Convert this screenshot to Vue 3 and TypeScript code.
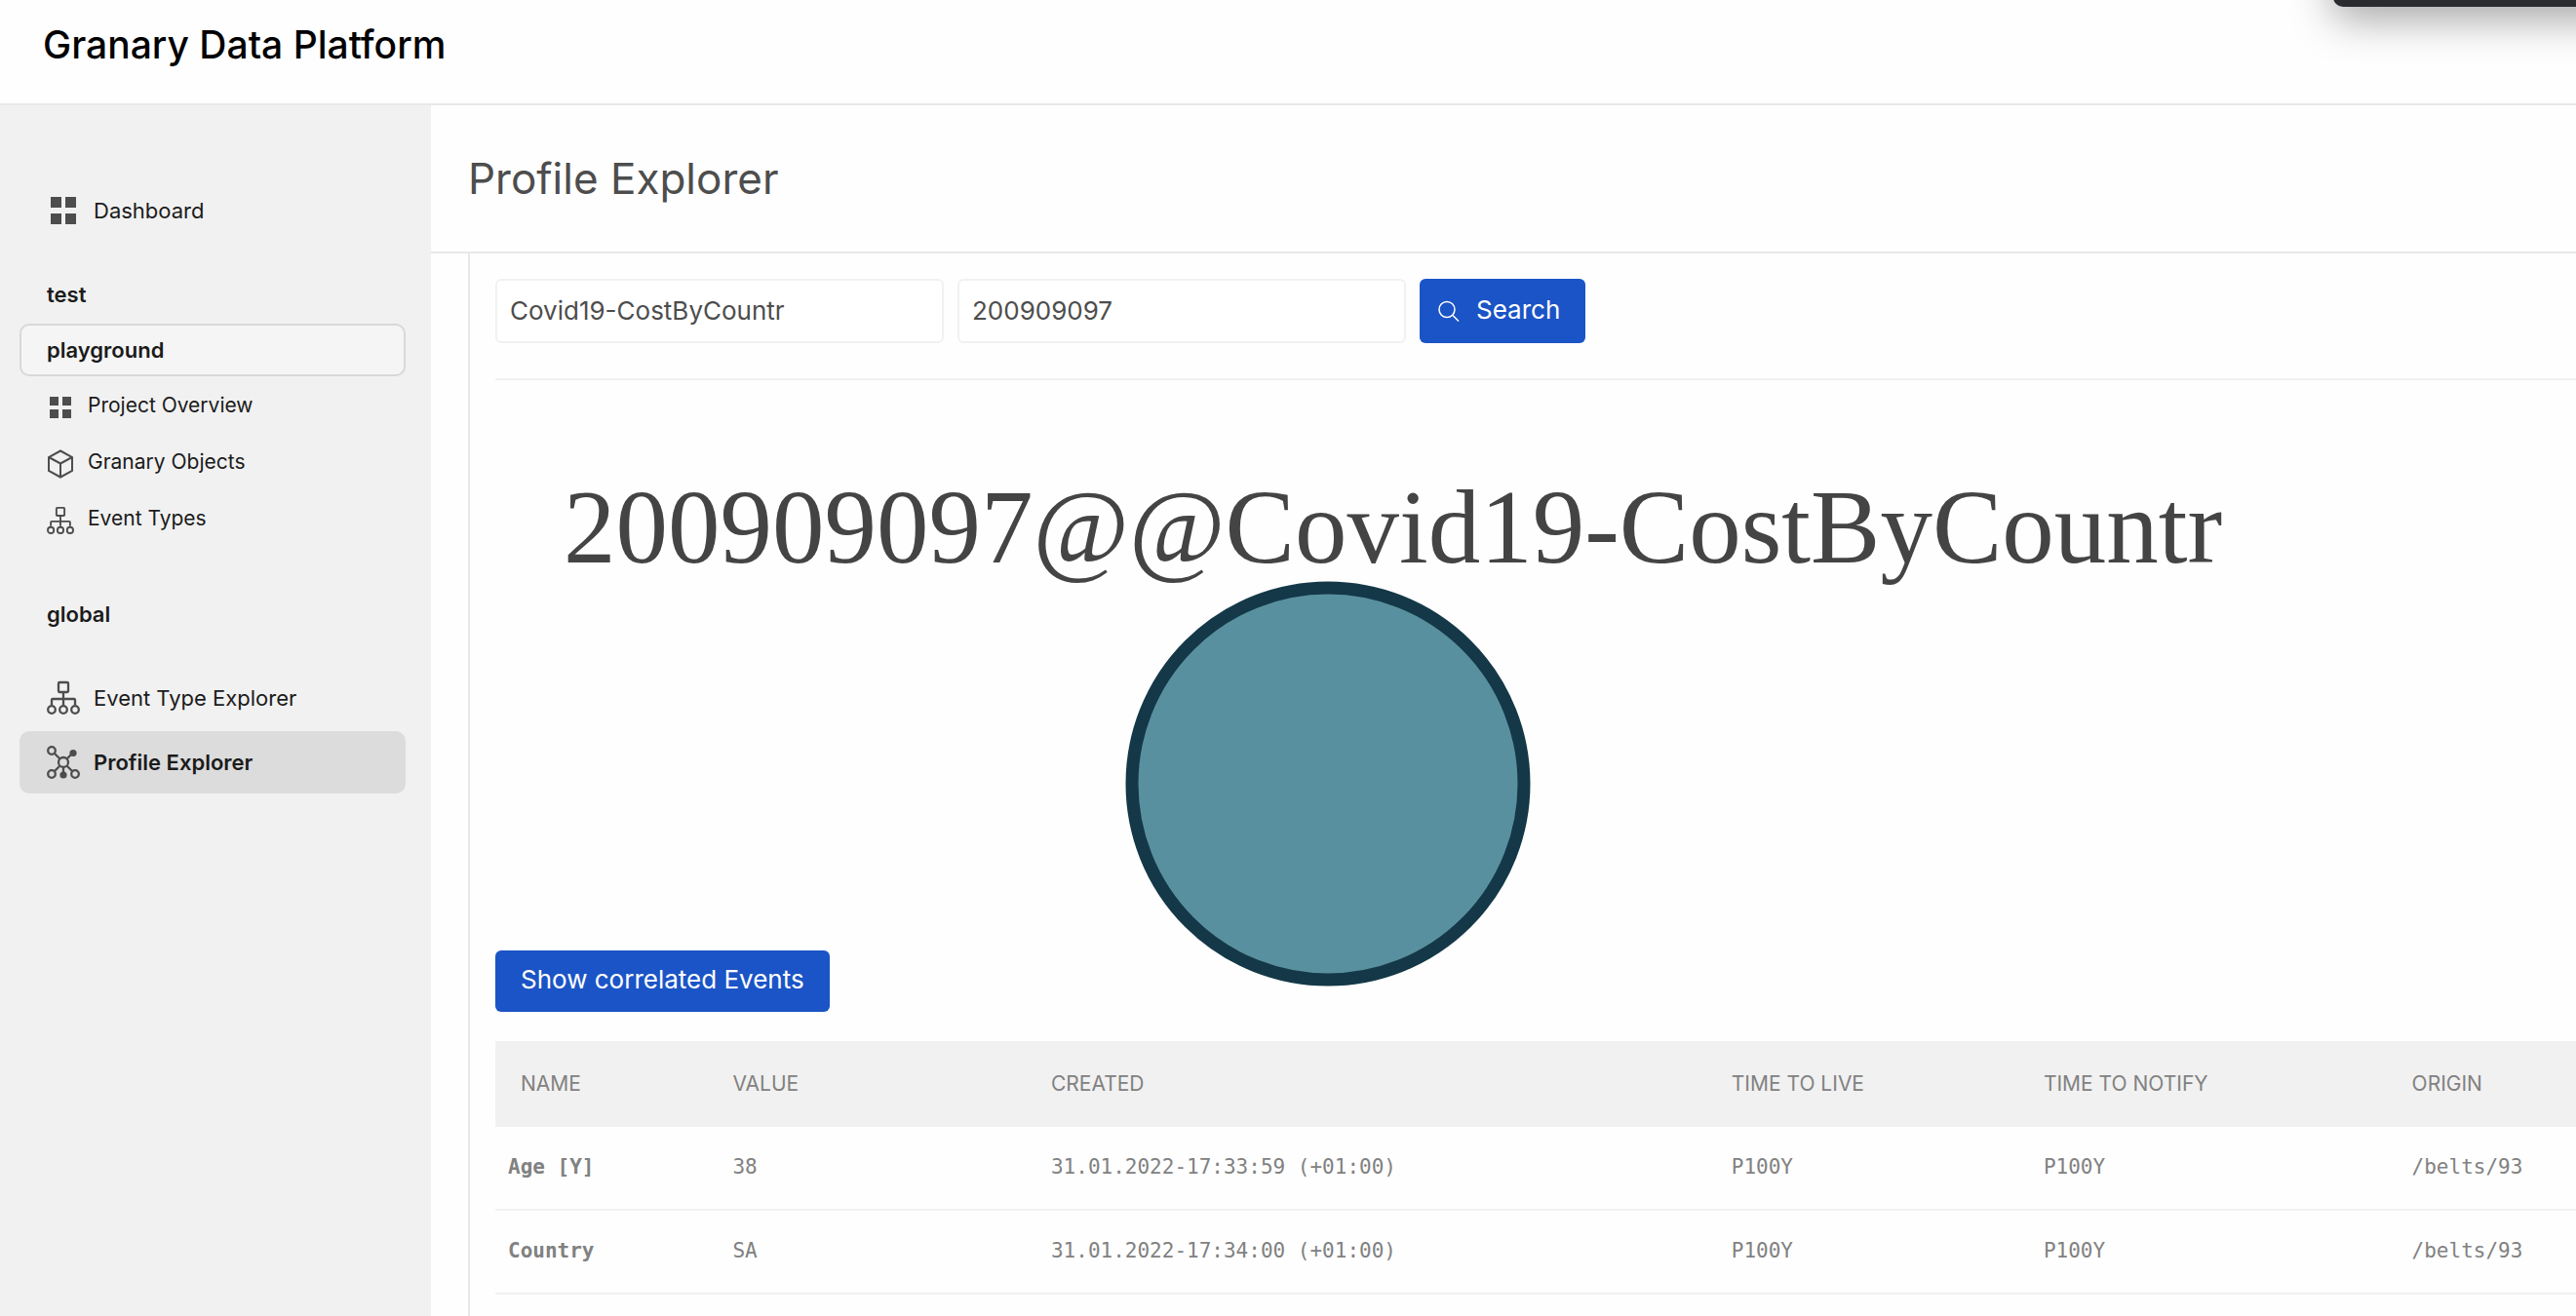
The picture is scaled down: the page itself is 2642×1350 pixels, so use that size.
<script setup lang="ts">
import { ref } from 'vue'

interface ProfileEntry {
  name: string
  value: string
  created: string
  timeToLive: string
  timeToNotify: string
  origin: string
}

const eventType = ref('Covid19-CostByCountr')
const correlationId = ref('200909097')

const columns = ['NAME', 'VALUE', 'CREATED', 'TIME TO LIVE', 'TIME TO NOTIFY', 'ORIGIN']

const entries: ProfileEntry[] = [
  { name: 'Age [Y]', value: '38', created: '31.01.2022-17:33:59 (+01:00)', timeToLive: 'P100Y', timeToNotify: 'P100Y', origin: '/belts/93' },
  { name: 'Country', value: 'SA', created: '31.01.2022-17:34:00 (+01:00)', timeToLive: 'P100Y', timeToNotify: 'P100Y', origin: '/belts/93' },
]
</script>

<template>
  <div class="app">
    <header class="topbar">
      <span class="brand">Granary Data Platform</span>
      <div class="overlay"></div>
    </header>

    <div class="body">
      <nav class="sidebar">
        <a href="#" class="item">
          <svg class="icon" viewBox="0 0 34 34" aria-hidden="true">
            <path class="solid" d="M4 3h11v11H4zM19 3h11v11H19zM4 20h11v11H4zM19 20h11v11H19z" />
          </svg>
          Dashboard
        </a>

        <a href="#" class="heading">test</a>
        <a href="#" class="heading selected">playground</a>

        <a href="#" class="item sub">
          <svg class="icon" viewBox="0 0 28 28" aria-hidden="true">
            <path class="solid" d="M3 3h9v9H3zM16 3h9v9h-9zM3 16h9v9H3zM16 16h9v9h-9z" />
          </svg>
          Project Overview
        </a>
        <a href="#" class="item sub">
          <svg class="icon" viewBox="0 0 28 28" aria-hidden="true">
            <path class="line thin" d="M14 0.5 26 7v14L14 27.5 2 21V7zM2 7l12 6.5L26 7M14 13.5v14" />
          </svg>
          Granary Objects
        </a>
        <a href="#" class="item sub">
          <svg class="icon" viewBox="0 0 34 34" aria-hidden="true">
            <rect class="line" x="12" y="1" width="10" height="10" rx="1" />
            <path class="line" d="M17 11v13M5 24v-5q0-1 1-1h22q1 0 1 1v5" />
            <circle class="line" cx="5" cy="29" r="3.800" />
            <circle class="line" cx="17" cy="29" r="3.800" />
            <circle class="line" cx="29" cy="29" r="3.800" />
          </svg>
          Event Types
        </a>

        <a href="#" class="heading global">global</a>

        <a href="#" class="item">
          <svg class="icon" viewBox="0 0 34 34" aria-hidden="true">
            <rect class="line" x="12" y="1" width="10" height="10" rx="1" />
            <path class="line" d="M17 11v13M5 24v-5q0-1 1-1h22q1 0 1 1v5" />
            <circle class="line" cx="5" cy="29" r="3.800" />
            <circle class="line" cx="17" cy="29" r="3.800" />
            <circle class="line" cx="29" cy="29" r="3.800" />
          </svg>
          Event Type Explorer
        </a>
        <a href="#" class="item current" aria-current="page">
          <svg class="icon" viewBox="0 0 34 34" aria-hidden="true">
            <path class="line" d="M8 8l5.500 5.500M26 8l-5.500 5.500M13.500 20.500L8 26M20.500 20.500L26 26M17 22v6" />
            <circle class="line" cx="17" cy="17" r="5" />
            <circle class="line" cx="5" cy="5" r="3.800" />
            <circle class="line" cx="5" cy="29" r="3.800" />
            <circle class="line" cx="29" cy="29" r="3.800" />
            <circle class="solid" cx="27" cy="7.500" r="3.600" />
            <circle class="solid" cx="17" cy="30" r="3.600" />
          </svg>
          Profile Explorer
        </a>
      </nav>

      <main class="main">
        <h1 class="title">Profile Explorer</h1>

        <div class="content">
          <form class="search" @submit.prevent>
            <input v-model="eventType" type="text" aria-label="Event type" />
            <input v-model="correlationId" type="text" aria-label="Correlation id" />
            <button type="submit" class="button">
              <svg class="lens" viewBox="0 0 22 22" aria-hidden="true">
                <circle cx="9" cy="9.500" r="8" />
                <path d="M15 15.500l6 6" />
              </svg>
              Search
            </button>
          </form>

          <section class="graph">
            <svg class="canvas" aria-label="Profile graph">
              <text class="node-label" x="70" y="187">200909097@@Covid19-CostByCountr</text>
              <circle class="node" cx="854" cy="414" r="201" />
            </svg>
            <button type="button" class="button events">Show correlated Events</button>
          </section>

          <table class="entries">
            <colgroup>
              <col class="c-name" />
              <col class="c-value" />
              <col class="c-created" />
              <col class="c-live" />
              <col class="c-notify" />
              <col />
            </colgroup>
            <thead>
              <tr>
                <th v-for="column in columns" :key="column" scope="col">{{ column }}</th>
              </tr>
            </thead>
            <tbody>
              <tr v-for="entry in entries" :key="entry.name">
                <th scope="row">{{ entry.name }}</th>
                <td>{{ entry.value }}</td>
                <td>{{ entry.created }}</td>
                <td>{{ entry.timeToLive }}</td>
                <td>{{ entry.timeToNotify }}</td>
                <td>{{ entry.origin }}</td>
              </tr>
            </tbody>
          </table>
        </div>
      </main>
    </div>
  </div>
</template>

<style>
body {
  margin: 0;
  background: #fefefe;
}
</style>

<style scoped>
.app {
  display: flex;
  flex-direction: column;
  min-height: 100vh;
  font-family: Inter, "Liberation Sans", sans-serif;
  color: #1b1b1b;
}

.app *,
.app {
  box-sizing: border-box;
}

.topbar {
  position: relative;
  height: 108px;
  padding: 21px 44px;
  border-bottom: 2px solid #e8e8e8;
  overflow: hidden;
}

.brand {
  display: block;
  font-size: 39px;
  font-weight: 500;
  line-height: 50px;
  color: #000;
}

/* Lower edge of a dark panel that hangs in from above */
.overlay {
  position: absolute;
  top: -60px;
  right: -60px;
  width: 309px;
  height: 67px;
  border-radius: 10px;
  background: #2a2b2f;
  box-shadow: 0 12px 44px rgba(0, 0, 0, 0.36);
}

.body {
  display: flex;
  flex: 1;
}

.sidebar {
  flex: none;
  width: 442px;
  padding: 76px 26px 0 20px;
  background: #f1f1f1;
}

.item,
.heading {
  display: flex;
  align-items: center;
  font-size: 22px;
  color: inherit;
  text-decoration: none;
}

.item {
  gap: 14px;
  height: 64px;
  margin-bottom: 2px;
  padding-left: 28px;
  border-radius: 10px;
}

.item.sub {
  height: 58px;
  margin-bottom: 0;
  font-size: 21px;
}

.item.current {
  background: #dcdcdc;
  font-weight: 600;
}

.heading {
  height: 54px;
  margin-bottom: 3px;
  padding-left: 26px;
  border: 2px solid transparent;
  border-radius: 10px;
  font-weight: 600;
}

.item + .heading {
  margin-top: 27px;
}

.heading.selected {
  margin-bottom: 0;
  border-color: #d8d8d8;
  background: #f5f5f5;
}

.item + .heading.global {
  margin: 43px 0 27px;
}

.icon {
  flex: none;
  width: 34px;
  height: 34px;
  overflow: visible;
}

.sub .icon {
  width: 28px;
  height: 28px;
  margin-top: 6px;
}

.solid {
  fill: #4d4d4d;
}

.line {
  fill: none;
  stroke: #4d4d4d;
  stroke-width: 2.3;
}

.line.thin {
  stroke-width: 2;
}

.main {
  flex: 1;
  min-width: 0;
  display: flex;
  flex-direction: column;
}

.title {
  margin: 0;
  padding: 47px 38px;
  border-bottom: 2px solid #e8e8e8;
  font-size: 44px;
  line-height: 56px;
  font-weight: 400;
  color: #4d4d4d;
}

.content {
  flex: 1;
  margin-left: 38px;
  padding: 26px 0 0 26px;
  border-left: 2px solid #e8e8e8;
}

.search {
  display: flex;
  gap: 14px;
  padding-bottom: 36px;
  border-bottom: 2px solid #f1f1f1;
}

.search input {
  width: 460px;
  height: 66px;
  padding: 0 13px 2px;
  border: 2px solid #f1f1f1;
  border-radius: 6px;
  background: #fff;
  font: inherit;
  font-size: 26px;
  color: #4d4d4d;
}

.button {
  display: flex;
  align-items: center;
  gap: 17px;
  height: 66px;
  padding: 0 26px 4px 19px;
  border: 0;
  border-radius: 6px;
  background: #1b54c6;
  font: inherit;
  font-size: 26px;
  color: #fff;
}

.lens {
  width: 22px;
  height: 22px;
  margin-top: 4px;
  fill: none;
  stroke: #fff;
  stroke-width: 1.5;
}

.graph {
  display: grid;
}

.canvas,
.events {
  grid-area: 1 / 1;
}

.canvas {
  width: 100%;
  height: 648px;
}

.node-label {
  font-family: "Liberation Serif", serif;
  font-size: 107px;
  fill: #444;
}

.node {
  fill: #5990a0;
  stroke: #143847;
  stroke-width: 13;
}

.events {
  align-self: end;
  justify-self: start;
  height: 63px;
  padding: 0 26px 4px;
}

.entries {
  width: 100%;
  margin-top: 30px;
  border-collapse: separate;
  border-spacing: 0;
  table-layout: fixed;
  color: #818181;
  font-family: "DejaVu Sans Mono", "Liberation Mono", monospace;
  font-size: 21px;
  text-align: left;
  white-space: nowrap;
}

.c-name {
  width: 10.8%;
}

.c-value {
  width: 15.3%;
}

.c-created {
  width: 32.7%;
}

.c-live {
  width: 15%;
}

.c-notify {
  width: 17.7%;
}

.entries th,
.entries td {
  height: 86px;
  padding: 0 0 2px 13px;
  border-bottom: 2px solid #f1f1f1;
}

.entries thead th {
  height: 88px;
  border: 0;
  background: #f1f1f1;
  font-family: Inter, "Liberation Sans", sans-serif;
  font-size: 21px;
  font-weight: 400;
}

.entries thead th:first-child {
  padding-left: 26px;
}
</style>
